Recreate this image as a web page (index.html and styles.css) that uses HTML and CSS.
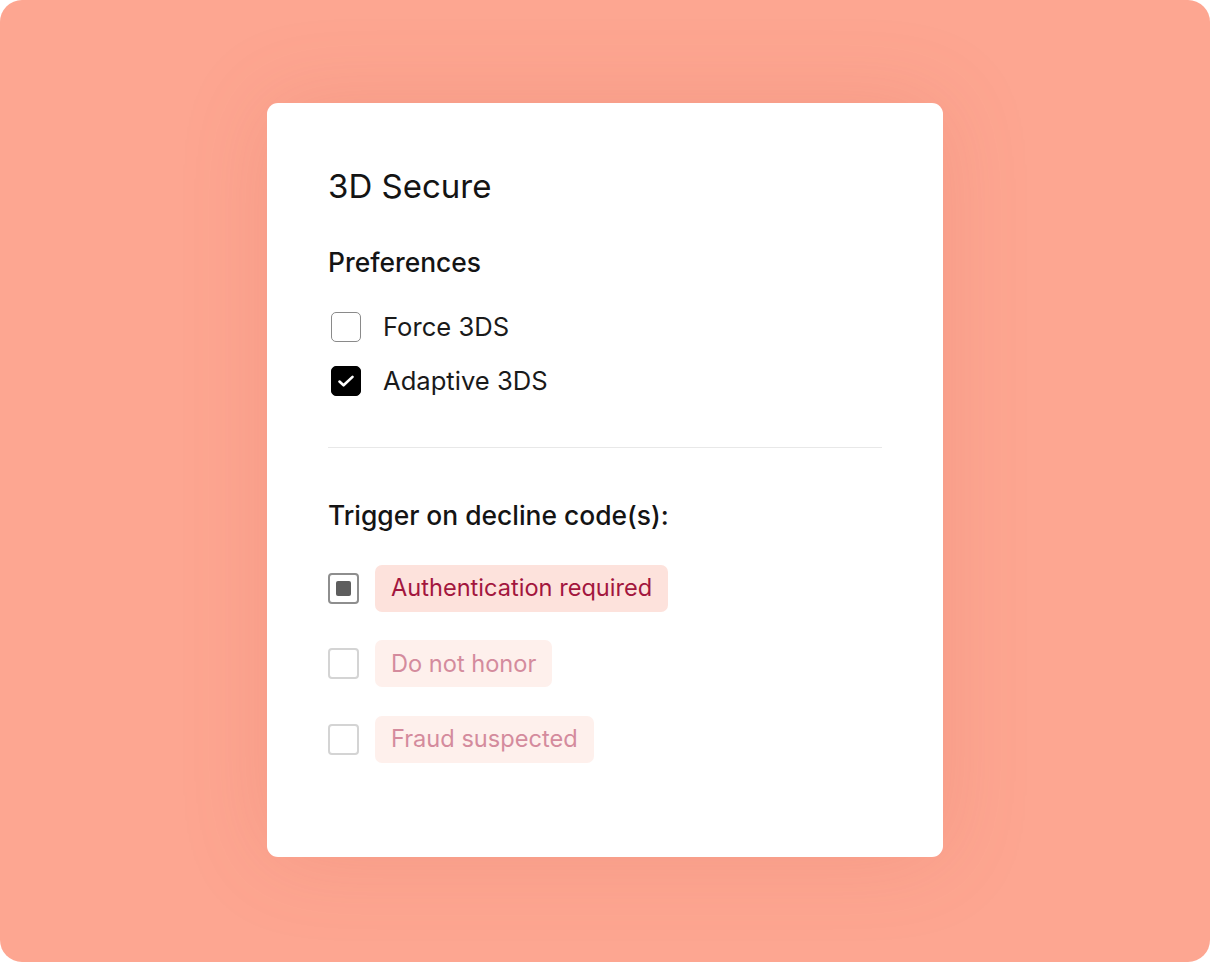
FILE: index.html
```html
<!DOCTYPE html>
<html lang="en">
<head>
<meta charset="utf-8">
<title>3D Secure</title>
<link rel="stylesheet" href="styles.css">
</head>
<body>
<div class="frame">
  <div class="card">
    <h1 class="title">3D Secure</h1>
    <h2 class="subtitle">Preferences</h2>
    <div class="prefs">
      <label class="pref">
        <span class="box"></span>
        <span class="pref-label">Force 3DS</span>
      </label>
      <label class="pref">
        <span class="box box-checked">
          <svg width="30" height="30" viewBox="0 0 30 30"><path d="M8 15.6 L12.4 19.6 L22 10.6" fill="none" stroke="#fff" stroke-width="2.8" stroke-linecap="round" stroke-linejoin="round"/></svg>
        </span>
        <span class="pref-label">Adaptive 3DS</span>
      </label>
    </div>
    <div class="divider"></div>
    <h2 class="subtitle trigger">Trigger on decline code(s):</h2>
    <div class="codes">
      <div class="code">
        <span class="cbox cbox-partial"><span class="inner"></span></span>
        <span class="tag">Authentication required</span>
      </div>
      <div class="code code-disabled">
        <span class="cbox"></span>
        <span class="tag">Do not honor</span>
      </div>
      <div class="code code-disabled">
        <span class="cbox"></span>
        <span class="tag">Fraud suspected</span>
      </div>
    </div>
  </div>
</div>
</body>
</html>
```

FILE: styles.css
```css
* { box-sizing: border-box; }
html, body { margin: 0; padding: 0; background: #ffffff; }
body { font-family: Inter, "Noto Sans", sans-serif; color: #111111; }

.frame {
  width: 1210px;
  height: 962px;
  border-radius: 22px;
  background: #fda691;
  display: flex;
  justify-content: center;
  align-items: flex-start;
  padding-top: 103px;
}

.card {
  width: 676px;
  height: 754px;
  background: #ffffff;
  border-radius: 11px;
  box-shadow: 0 0 90px rgba(200, 90, 70, 0.16);
  padding: 65px 61px 0 61px;
}

.title {
  margin: 0;
  font-size: 33px;
  line-height: 36px;
  font-weight: 400;
  color: #141414;
}

.subtitle {
  margin: 42px 0 0 0;
  font-size: 26.4px;
  line-height: 32px;
  font-weight: 500;
  color: #141414;
}

.prefs {
  margin-top: 34px;
  display: flex;
  flex-direction: column;
  gap: 24px;
}

.pref {
  display: flex;
  align-items: center;
  height: 30px;
  padding-left: 3px;
}

.box {
  width: 30px;
  height: 30px;
  border: 1.5px solid #8a8a8a;
  border-radius: 5px;
  display: flex;
  align-items: center;
  justify-content: center;
  flex: none;
}

.box svg { display: block; }

.box-checked {
  background: #000000;
  border-color: #000000;
}

.pref-label {
  margin-left: 22px;
  font-size: 25.6px;
  line-height: 30px;
  color: #1a1a1a;
}

.divider {
  margin-top: 51px;
  height: 1px;
  background: #e8e8e8;
}

.trigger { margin-top: 51px; }

.codes {
  margin-top: 33.5px;
  display: flex;
  flex-direction: column;
  gap: 28.5px;
}

.code {
  display: flex;
  align-items: center;
  height: 47px;
}

.cbox {
  width: 31px;
  height: 31px;
  border: 2px solid #8e8e8e;
  border-radius: 4px;
  display: flex;
  align-items: center;
  justify-content: center;
  flex: none;
}

.cbox .inner {
  width: 15px;
  height: 15px;
  background: #5e5e5e;
  border-radius: 2px;
}

.tag {
  margin-left: 16px;
  height: 47px;
  display: flex;
  align-items: center;
  padding: 0 16px 0 16px;
  border-radius: 7px;
  background: #fde2dc;
  color: #a3163e;
  font-size: 23.6px;
  line-height: 30px;
}

.code-disabled .cbox { border-color: #d4d4d4; }
.code-disabled .tag { background: #fef0ec; color: #d48b9d; }
```
